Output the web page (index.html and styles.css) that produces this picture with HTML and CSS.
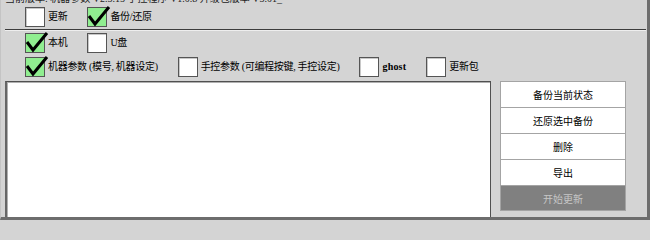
FILE: index.html
```html
<!DOCTYPE html>
<html>
<head>
<meta charset="utf-8">
<link rel="stylesheet" href="styles.css">
</head>
<body>
<div class="window">
  <div class="top">
    <div class="clip"><span>当前版本: 机器参数 V2.3.15 手控程序 V1.0.8 升级包版本 V3.01_</span></div>
    <div class="row">
      <div class="opt"><span class="cb"></span><span class="lbl">更新</span></div>
      <div class="opt"><span class="cb on"><svg width="24" height="20" viewBox="0 0 24 20"><path d="M2 9 L8 17 L22 0"/></svg></span><span class="lbl">备份/还原</span></div>
    </div>
  </div>
  <div class="row row-a">
    <div class="opt"><span class="cb on"><svg width="24" height="20" viewBox="0 0 24 20"><path d="M2 9 L8 17 L22 0"/></svg></span><span class="lbl">本机</span></div>
    <div class="opt"><span class="cb"></span><span class="lbl">U盘</span></div>
  </div>
  <div class="row row-b">
    <div class="opt"><span class="cb on"><svg width="24" height="20" viewBox="0 0 24 20"><path d="M2 9 L8 17 L22 0"/></svg></span><span class="lbl">机器参数 (模号, 机器设定)</span></div>
    <div class="opt"><span class="cb"></span><span class="lbl">手控参数 (可编程按键, 手控设定)</span></div>
    <div class="opt"><span class="cb"></span><span class="lbl latin">ghost</span></div>
    <div class="opt"><span class="cb"></span><span class="lbl">更新包</span></div>
  </div>
  <div class="main">
    <div class="list"></div>
    <div class="btns">
      <div class="btn">备份当前状态</div>
      <div class="btn">还原选中备份</div>
      <div class="btn">删除</div>
      <div class="btn">导出</div>
      <div class="btn dis">开始更新</div>
    </div>
  </div>
</div>
</body>
</html>
```
FILE: styles.css
```css
html, body {
  margin: 0;
  padding: 0;
}
body {
  background: #d4d4d4;
  font-family: "Liberation Serif", "Noto Sans CJK SC", serif;
  font-size: 10px;
  color: #000;
}
.window {
  width: 650px;
  height: 220px;
  box-sizing: border-box;
  border-right: 3px solid #6d6d6d;
  border-bottom: 3px solid #6d6d6d;
  border-left: 1px solid #c4c4c4;
  display: flex;
  flex-direction: column;
  overflow: hidden;
}
.top {
  margin: 0 1px 0 4px;
  height: 29px;
  border-bottom: 1px solid #3c3c3c;
  box-shadow: 0 1px 0 #eeeeee;
}
.clip {
  height: 4px;
  overflow: hidden;
  display: flex;
  align-items: flex-end;
}
.clip span {
  line-height: 10px;
  white-space: nowrap;
  color: #222;
}
.row {
  display: flex;
  align-items: center;
  gap: 20px;
  height: 20px;
  padding-left: 20px;
  margin-top: 3px;
}
.row-a {
  padding-left: 24px;
  margin-top: 3px;
}
.row-b {
  padding-left: 24px;
  margin-top: 4px;
}
.opt {
  display: flex;
  align-items: center;
  gap: 3px;
}
.cb {
  width: 20px;
  height: 20px;
  box-sizing: border-box;
  border: 1px solid #555;
  box-shadow: inset 1px 1px 0 #c8c8c8;
  background: #fff;
  position: relative;
  flex: none;
}
.cb.on {
  background: #90ee90;
  box-shadow: none;
}
.cb svg {
  position: absolute;
  left: -1px;
  top: -1px;
  overflow: visible;
}
.cb path {
  fill: none;
  stroke: #000;
  stroke-width: 3;
  stroke-linejoin: miter;
}
.lbl {
  white-space: nowrap;
  line-height: 20px;
  letter-spacing: -0.3px;
}
.latin {
  font-weight: bold;
  letter-spacing: 0.2px;
}
.main {
  display: flex;
  margin-top: 4px;
  margin-left: 4px;
  flex: 1;
  min-height: 0;
}
.list {
  width: 486px;
  box-sizing: border-box;
  background: #fff;
  border: 1px solid #505050;
  border-left: 2px solid #666;
  border-bottom: none;
  box-shadow: inset 1px 1px 0 #b0b0b0;
}
.btns {
  margin-left: 9px;
  width: 126px;
  align-self: flex-start;
  box-sizing: border-box;
  border: 1px solid #a4a4a4;
  display: flex;
  flex-direction: column;
}
.btn {
  height: 25px;
  border-bottom: 1px solid #a4a4a4;
  background: #fff;
  display: flex;
  align-items: center;
  justify-content: center;
  font-family: "Noto Sans CJK SC", sans-serif;
}
.btn.dis {
  height: 24px;
  border-bottom: none;
  background: #808080;
  color: #c6c6c6;
}
```
